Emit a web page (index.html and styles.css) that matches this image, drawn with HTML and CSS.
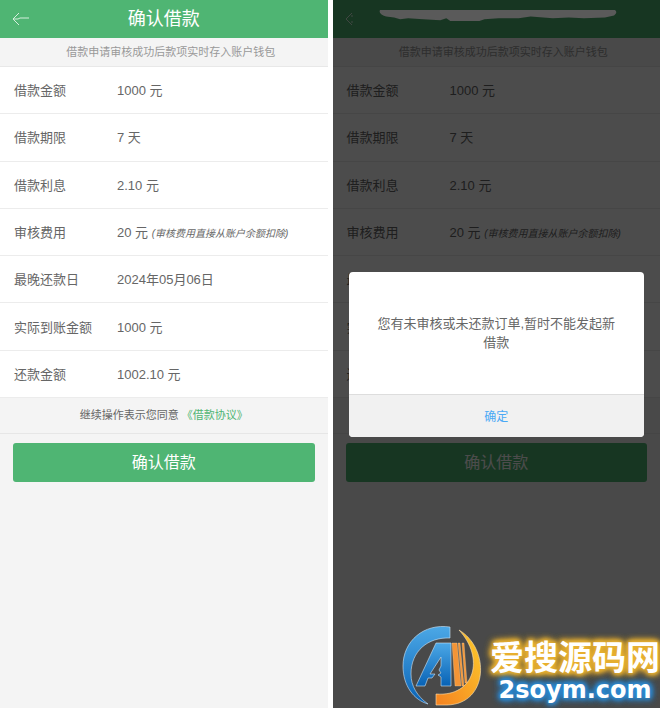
FILE: index.html
```html
<!DOCTYPE html>
<html lang="zh-CN">
<head>
<meta charset="utf-8">
<meta name="viewport" content="width=device-width, initial-scale=1">
<title>确认借款</title>
<link rel="stylesheet" href="styles.css">
</head>
<body>
<div class="screens">
  <main class="screen">
    <header class="bar">
      <a class="back" href="#" aria-label="返回">
        <svg width="18" height="14" viewBox="0 0 18 14"><path d="M7 1 1 7l6 6M1 7h5l2-1h9"/></svg>
      </a>
      <h1 class="title">确认借款</h1>
    </header>
    <p class="notice">借款申请审核成功后款项实时存入账户钱包</p>
    <table class="details">
      <tr><th scope="row">借款金额</th><td>1000 元</td></tr>
      <tr><th scope="row">借款期限</th><td>7 天</td></tr>
      <tr><th scope="row">借款利息</th><td>2.10 元</td></tr>
      <tr><th scope="row">审核费用</th><td>20 元 <em>(审核费用直接从账户余额扣除)</em></td></tr>
      <tr><th scope="row">最晚还款日</th><td>2024年05月06日</td></tr>
      <tr><th scope="row">实际到账金额</th><td>1000 元</td></tr>
      <tr><th scope="row">还款金额</th><td>1002.10 元</td></tr>
    </table>
    <p class="agree">继续操作表示您同意 <a href="#">《借款协议》</a></p>
    <div class="action"><button class="submit" type="button">确认借款</button></div>
  </main>

  <section class="screen">
    <header class="bar">
      <a class="back" href="#" aria-label="返回">
        <svg width="18" height="14" viewBox="0 0 18 14"><path d="M7 1 1 7l6 6M7 3v2M7 9v2"/></svg>
      </a>
    </header>
    <p class="notice">借款申请审核成功后款项实时存入账户钱包</p>
    <table class="details">
      <tr><th scope="row">借款金额</th><td>1000 元</td></tr>
      <tr><th scope="row">借款期限</th><td>7 天</td></tr>
      <tr><th scope="row">借款利息</th><td>2.10 元</td></tr>
      <tr><th scope="row">审核费用</th><td>20 元 <em>(审核费用直接从账户余额扣除)</em></td></tr>
      <tr><th scope="row">最晚还款日</th><td></td></tr>
      <tr><th scope="row">实际到账金额</th><td></td></tr>
      <tr><th scope="row">还款金额</th><td></td></tr>
    </table>
    <p class="agree"></p>
    <div class="action"><button class="submit" type="button">确认借款</button></div>

    <div class="overlay">
      <svg class="smear" viewBox="0 0 238 13" preserveAspectRatio="none" aria-hidden="true"><path d="M2 0H236Q239 3 235 6L226 8L205 9L190 8L174 9L152 7L140 9L120 9L106 10L101 12L72 12L68 9L62 11L45 10L30 9L22 10L16 8L8 7Q0 4 2 0Z"/></svg>
      <div class="dialog" role="dialog" aria-modal="true" aria-labelledby="message">
        <p class="message" id="message">您有未审核或未还款订单,暂时不能发起新借款</p>
        <button class="confirm" type="button">确定</button>
      </div>
    </div>
  </section>
</div>

<div class="brand">
  <svg class="logo" width="80" height="80" viewBox="0 0 80 80" aria-hidden="true">
    <defs>
      <linearGradient id="blue" x1="0" y1="0" x2="0" y2="1"><stop offset="0" stop-color="#4ca8e6"/><stop offset="1" stop-color="#0862b5"/></linearGradient>
      <linearGradient id="gold" x1="0" y1="1" x2="1" y2="0"><stop offset="0" stop-color="#f58220"/><stop offset="1" stop-color="#fccb2c"/></linearGradient>
    </defs>
    <path fill="url(#blue)" stroke="#cfe4f5" stroke-width=".6" d="M48 1C22-3 1 15 1 40c0 20 11 34 25 38C15 70 9 60 9 48 9 25 26 11 48 12Z"/>
    <path fill="url(#gold)" stroke="#fbe3b5" stroke-width=".6" d="M57 4c31 18 30 74-12 75H34V68c39 3 49-36 23-64Z"/>
    <path fill="url(#blue)" stroke="#cfe4f5" stroke-width=".6" d="M34 17h15v43H39V51l-3-2 3-2-2-3 2-4V31L28 48h5l-3 4h-4l-3 8H14Z"/>
    <path fill="#f39436" stroke="#fbe3b5" stroke-width=".3" d="M50 17h5l4 43h-6ZM56 17h2l4 43h-2ZM60 17h2l3 40h-2Z"/>
  </svg>
  <div class="words">
    <span class="name">爱搜源码网</span>
    <span class="site">2soym.com</span>
  </div>
</div>
</body>
</html>
```
FILE: styles.css
```css
* { box-sizing: border-box; }

body {
  margin: 0;
  background: #fff;
  color: #666;
  font: 13px/19px "Liberation Sans", "Noto Sans CJK SC", sans-serif;
  position: relative;
}

p, h1 { margin: 0; }
a { color: #4fb573; text-decoration: none; }
button { border: 0; font-family: inherit; cursor: pointer; }

.screens {
  display: grid;
  grid-template-columns: 1fr 1fr;
  gap: 5px;
  min-height: 100vh;
}

.screen {
  position: relative;
  background: #f4f4f4;
}

.bar {
  display: grid;
  grid-template-columns: 32px 1fr 32px;
  align-items: center;
  height: 38px;
  padding: 0 12px;
  background: #4fb573;
}

.back { display: flex; }
.back svg { fill: none; stroke: #d5eedd; stroke-width: 1; }

.title {
  color: #fff;
  font-size: 18px;
  font-weight: 400;
  line-height: 36px;
  text-align: center;
}

.notice {
  height: 29px;
  padding-left: 14px;
  border-bottom: 1px solid #e8e8e8;
  color: #999;
  font-size: 11px;
  line-height: 28px;
  text-align: center;
}

.details {
  width: 100%;
  height: 331px;
  border-collapse: separate;
  border-spacing: 0;
  background: #fff;
}

.details th, .details td {
  padding: 1px 0 0 14px;
  border-bottom: 1px solid #ececec;
  font-weight: 400;
  text-align: left;
  white-space: nowrap;
}

.details th { width: 103px; }
.details em { font-size: 10px; line-height: 10px; }

.agree {
  height: 36px;
  border-bottom: 1px solid #e6e6e6;
  font-size: 11px;
  line-height: 34px;
  text-align: center;
}

.action { padding: 9px 13px; }

.submit {
  display: block;
  width: 100%;
  height: 39px;
  padding: 0 0 4px;
  border-radius: 3px;
  background: #4fb573;
  color: #fff;
  font-size: 16px;
}

.overlay {
  position: absolute;
  inset: 0;
  display: flex;
  align-items: center;
  justify-content: center;
  background: rgba(0, 0, 0, .7);
}

.smear {
  position: absolute;
  top: 10px;
  left: 14%;
  width: 73%;
  height: 12px;
  fill: #5a5a5a;
}

.dialog {
  width: 90%;
  overflow: hidden;
  border-radius: 4px;
  background: #fff;
}

.message {
  padding: 42px 24px;
  text-align: center;
}

.confirm {
  display: block;
  width: 100%;
  height: 43px;
  border-top: 1px solid #ddd;
  background: #f1f1f1;
  color: #4aa9f5;
  font-size: 12px;
}

.brand {
  position: absolute;
  right: 0;
  bottom: 2px;
  display: flex;
  align-items: flex-end;
  gap: 8px;
}

.words {
  display: flex;
  flex-direction: column;
  align-items: center;
  color: #fff;
  font-weight: 700;
}

.name {
  font-family: "Noto Sans CJK SC", sans-serif;
  font-size: 34px;
  line-height: 36px;
  text-shadow: 0 0 4px #e8b030, 0 0 5px #e8b030, 0 0 6px #e8b030, 0 0 7px #e8b030, 0 0 8px #e8b030, 0 0 9px #e8b030;
}

.site {
  font-family: "DejaVu Sans", sans-serif;
  font-size: 24px;
  line-height: 32px;
  text-shadow: 0 0 4px #2c88d0, 0 0 5px #2c88d0, 0 0 6px #2c88d0, 0 0 7px #2c88d0, 0 0 8px #2c88d0, 0 0 9px #2c88d0;
}
```
